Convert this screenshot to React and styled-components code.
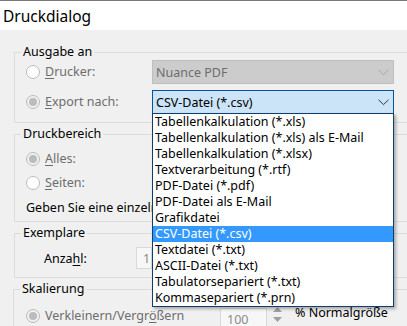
import styled, { createGlobalStyle } from "styled-components";

const GlobalStyle = createGlobalStyle`
  html, body {
    margin: 0;
    padding: 0;
  }
  body {
    width: 407px;
    height: 326px;
    overflow: hidden;
    background: #f0f0f0;
    font-family: "Noto Sans", "Open Sans", sans-serif;
    font-size: 12.5px;
    color: #000;
  }
`;

const Window = styled.div`
  width: 407px;
  height: 326px;
  overflow: hidden;
  display: flex;
  flex-direction: column;
  background: #f0f0f0;
`;

const TitleBar = styled.div`
  height: 29px;
  flex-shrink: 0;
  display: flex;
  align-items: center;
  padding-left: 3px;
  border-top: 1px solid #7a7a7a;
  background: #fff;
  font-size: 15.5px;
`;

const Body = styled.div`
  display: flex;
  flex-direction: column;
  gap: 3px;
  padding: 14px 0 0 14px;
`;

const Group = styled.fieldset`
  box-sizing: border-box;
  width: 420px;
  min-width: 0;
  margin: 0 0 0 ${p => p.$shift || 0}px;
  padding: ${p => p.$pad};
  border: 1px solid #dcdcdc;
`;

const Legend = styled.legend`
  padding: 0 2px;
  line-height: 16px;
`;

const OptionGrid = styled.div`
  display: grid;
  grid-template-columns: 131px 242px;
  row-gap: 6px;
  align-items: center;
`;

const RadioLabel = styled.label`
  display: flex;
  align-items: center;
  gap: 5px;
  margin-left: ${p => p.$indent ?? 5}px;
  width: ${p => (p.$width ? `${p.$width}px` : "auto")};
  color: ${p => (p.$disabled ? "#6d6d6d" : "#000")};
  line-height: 16px;
  white-space: nowrap;
`;

const Radio = styled.span`
  position: relative;
  box-sizing: border-box;
  width: 14px;
  height: 14px;
  border-radius: 50%;
  border: 1px solid #bcbcbc;
  background: ${p => (p.$checked ? "#f0f0f0" : "#fff")};
  flex-shrink: 0;

  &::after {
    content: "";
    display: ${p => (p.$checked ? "block" : "none")};
    position: absolute;
    left: 2px;
    top: 2px;
    width: 8px;
    height: 8px;
    border-radius: 50%;
    background: #bcbcbc;
  }
`;

const Key = styled.u`
  text-decoration: underline;
  text-underline-offset: 2px;
`;

const Combo = styled.div`
  position: relative;
  box-sizing: border-box;
  height: 24px;
  display: flex;
  align-items: center;
  justify-content: space-between;
  padding: 0 4px 0 3px;
  border: 1px solid ${p => (p.$active ? "#005499" : "#bfbfbf")};
  background: ${p => (p.$active ? "#cce4f7" : "#cccccc")};
  color: ${p => (p.$active ? "#000" : "#6d6d6d")};
  white-space: nowrap;
`;

const Chevron = ({ color }) => (
  <svg width="11" height="7" viewBox="0 0 11 7">
    <polyline points="0.5,0.8 5.5,5.6 10.5,0.8" fill="none" stroke={color} strokeWidth="1" />
  </svg>
);

const DropList = styled.ul`
  position: absolute;
  top: 100%;
  left: -1px;
  box-sizing: border-box;
  width: 242px;
  margin: 0;
  padding: 0;
  list-style: none;
  background: #fff;
  border: 1px solid #0d3f75;
  box-shadow: 2px 2px 3px rgba(0, 0, 0, 0.3);
  z-index: 2;
`;

const DropItem = styled.li`
  height: 16px;
  line-height: 16px;
  padding-left: 2px;
  color: ${p => (p.$selected ? "#fff" : "#000")};
  background: ${p => (p.$selected ? "#3399ff" : "transparent")};
  white-space: nowrap;
`;

const Rows = styled.div`
  display: flex;
  flex-direction: column;
`;

const Row = styled.div`
  height: ${p => p.$h || 24}px;
  display: flex;
  align-items: center;
`;

const Hint = styled.span`
  width: 126px;
  margin-left: 5px;
  overflow: hidden;
  white-space: nowrap;
`;

const FieldLabel = styled.span`
  width: 92px;
  margin-left: 23px;
`;

const SpinBox = styled.div`
  box-sizing: border-box;
  width: ${p => p.$w}px;
  height: 22px;
  display: flex;
  align-items: center;
  padding-left: 6px;
  border: 1px solid #d9d9d9;
  background: #f7f7f7;
  color: #8a8a8a;
  align-self: flex-start;
  flex-shrink: 0;
`;

const SpinArrows = styled.div`
  display: flex;
  flex-direction: column;
  gap: 5px;
  margin: -1px 13px 0 6px;
  align-self: flex-start;
`;

const UnitText = styled.span`
  align-self: flex-start;
  margin-top: -3px;
  line-height: 16px;
  white-space: nowrap;
`;

const ScaleRow = styled.div`
  display: flex;
  align-items: center;
  height: 16px;
  margin-top: 11px;
`;

const formats = [
  "Tabellenkalkulation (*.xls)",
  "Tabellenkalkulation (*.xls) als E-Mail",
  "Tabellenkalkulation (*.xlsx)",
  "Textverarbeitung (*.rtf)",
  "PDF-Datei (*.pdf)",
  "PDF-Datei als E-Mail",
  "Grafikdatei",
  "CSV-Datei (*.csv)",
  "Textdatei (*.txt)",
  "ASCII-Datei (*.txt)",
  "Tabulatorsepariert (*.txt)",
  "Kommasepariert (*.prn)",
];

export default function App() {
  const selected = "CSV-Datei (*.csv)";

  return (
    <Window>
      <GlobalStyle />
      <TitleBar>Druckdialog</TitleBar>
      <Body>
        <Group $pad="0 6px 8px">
          <Legend>Ausgabe an</Legend>
          <OptionGrid>
            <RadioLabel $disabled>
              <Radio />
              <span><Key>D</Key>rucker:</span>
            </RadioLabel>
            <Combo>
              <span>Nuance PDF</span>
              <Chevron color="#a6a6a6" />
            </Combo>
            <RadioLabel $disabled>
              <Radio $checked />
              <span><Key>E</Key>xport nach:</span>
            </RadioLabel>
            <Combo $active>
              <span>{selected}</span>
              <Chevron color="#333" />
              <DropList>
                {formats.map(f => (
                  <DropItem key={f} $selected={f === selected}>{f}</DropItem>
                ))}
              </DropList>
            </Combo>
          </OptionGrid>
        </Group>

        <Group $pad="5px 6px 2px">
          <Legend>Druckbereich</Legend>
          <Rows>
            <Row>
              <RadioLabel $disabled>
                <Radio $checked />
                <span><Key>A</Key>lles:</span>
              </RadioLabel>
            </Row>
            <Row>
              <RadioLabel $disabled>
                <Radio />
                <span><Key>S</Key>eiten:</span>
              </RadioLabel>
            </Row>
            <Row>
              <Hint>Geben Sie eine einzelne Seitenzahl oder einen Seitenbereich ein</Hint>
            </Row>
          </Rows>
        </Group>

        <Group $pad="6px 6px 8px">
          <Legend>Exemplare</Legend>
          <Row $h={22}>
            <FieldLabel>Anza<Key>h</Key>l:</FieldLabel>
            <SpinBox $w={16}>1</SpinBox>
          </Row>
        </Group>

        <Group $pad="0 6px 8px" $shift={-1}>
          <Legend>Skalierung</Legend>
          <ScaleRow>
            <RadioLabel $disabled $width={194} $indent={6}>
              <Radio $checked />
              <span>Verkleinern/Vergr<Key>ö</Key>ßern</span>
            </RadioLabel>
            <SpinBox $w={47}>100</SpinBox>
            <SpinArrows>
              <svg width="9" height="5" viewBox="0 0 9 5">
                <polygon points="0,5 4.5,0 9,5" fill="#a0a0a0" />
              </svg>
              <svg width="9" height="5" viewBox="0 0 9 5">
                <polygon points="0,0 4.5,5 9,0" fill="#a0a0a0" />
              </svg>
            </SpinArrows>
            <UnitText>% Normalgröße</UnitText>
          </ScaleRow>
        </Group>
      </Body>
    </Window>
  );
}
